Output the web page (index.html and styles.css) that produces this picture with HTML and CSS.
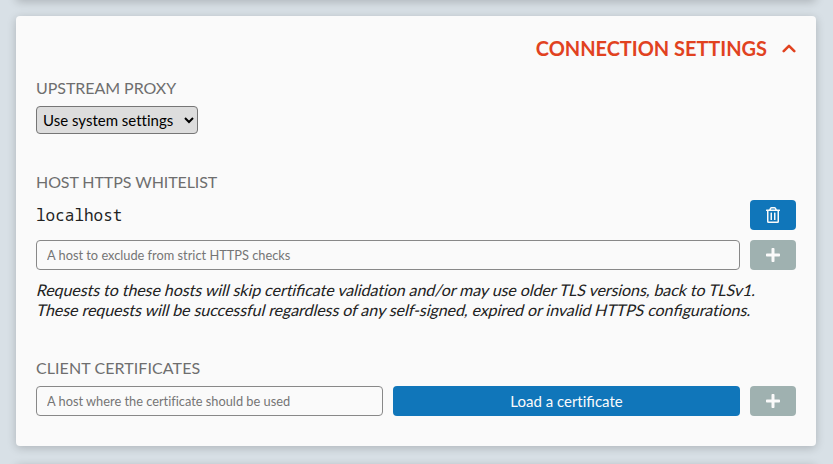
FILE: index.html
```html
<!DOCTYPE html>
<html lang="en">
<head>
<meta charset="utf-8">
<title>Settings</title>
<link rel="stylesheet" href="styles.css">
</head>
<body>
<main class="page">
<div class="card previous"></div>
<section class="card">
  <header class="card-header">
    <h1>Connection settings</h1>
    <svg class="chevron" viewBox="0 0 14 9"><path d="M1.700 7.100L7 1.900L12.300 7.100"/></svg>
  </header>
  <h2 class="label upstream">Upstream Proxy</h2>
  <select class="proxy"><option>Use system settings</option></select>
  <h2 class="label hosts">Host HTTPS Whitelist</h2>
  <div class="grid whitelist">
    <div class="host">localhost</div>
    <button class="button"><svg class="trash" viewBox="0 0 448 512"><path d="M268 416h24a12 12 0 0 0 12-12V188a12 12 0 0 0-12-12h-24a12 12 0 0 0-12 12v216a12 12 0 0 0 12 12zM432 80h-82.41l-34-56.7A48 48 0 0 0 274.41 0H173.59a48 48 0 0 0-41.16 23.3L98.41 80H16A16 16 0 0 0 0 96v16a16 16 0 0 0 16 16h16v336a48 48 0 0 0 48 48h288a48 48 0 0 0 48-48V128h16a16 16 0 0 0 16-16V96a16 16 0 0 0-16-16zM171.84 50.91A6 6 0 0 1 177 48h94a6 6 0 0 1 5.15 2.91L293.61 80H154.39zM368 464H80V128h288zm-212-48h24a12 12 0 0 0 12-12V188a12 12 0 0 0-12-12h-24a12 12 0 0 0-12 12v216a12 12 0 0 0 12 12z"/></svg></button>
    <input class="input" placeholder="A host to exclude from strict HTTPS checks">
    <button class="button" disabled><svg class="plus" viewBox="0 0 448 512"><path d="M416 208H272V64c0-17.670-14.330-32-32-32h-32c-17.670 0-32 14.330-32 32v144H32c-17.670 0-32 14.330-32 32v32c0 17.670 14.330 32 32 32h144v144c0 17.670 14.330 32 32 32h32c17.670 0 32-14.330 32-32V304h144c17.670 0 32-14.330 32-32v-32c0-17.670-14.330-32-32-32z"/></svg></button>
  </div>
  <p class="note"><span class="line">Requests to these hosts will skip certi<span class="fi">fi</span>cate validation and/or may use older TLS versions, back to TLSv1.</span> <span class="line">These requests will be successful regardless of any self-signed, expired or invalid HTTPS con<span class="fi">fi</span>gurations.</span></p>
  <h2 class="label clients">Client Certificates</h2>
  <div class="grid certificates">
    <input class="input" placeholder="A host where the certificate should be used">
    <button class="button"><span>Load a certi<span class="fi">fi</span>cate</span></button>
    <button class="button" disabled><svg class="plus" viewBox="0 0 448 512"><path d="M416 208H272V64c0-17.670-14.330-32-32-32h-32c-17.670 0-32 14.330-32 32v144H32c-17.670 0-32 14.330-32 32v32c0 17.670 14.330 32 32 32h144v144c0 17.670 14.330 32 32 32h32c17.670 0 32-14.330 32-32V304h144c17.670 0 32-14.330 32-32v-32c0-17.670-14.330-32-32-32z"/></svg></button>
  </div>
</section>
<div class="card next"></div>
</main>
</body>
</html>
```
FILE: styles.css
```css
* { box-sizing: border-box; }
body {
  margin: 0;
  background: #d8e0e6;
  color: #222;
  font: 16px/20px Lato, sans-serif;
  font-variant-ligatures: none;
}
.page {
  height: 464px;
  padding: 0 17px 0 16px;
  overflow: hidden;
}
.card {
  height: 430px;
  padding: 20px;
  border-radius: 4px;
  background: #fafafa;
  box-shadow: 0 2px 10px rgba(0, 0, 0, 0.2);
}
.previous { height: 40px; margin: -40px 0 16px; }
.next { height: 40px; margin-top: 18px; }
.card-header {
  display: flex;
  justify-content: flex-end;
  align-items: center;
  height: 24px;
  margin-bottom: 18px;
  color: #e1421f;
}
h1 {
  margin: 0;
  font-size: 20px;
  font-weight: bold;
  letter-spacing: -0.04px;
  text-transform: uppercase;
}
svg { display: block; fill: currentColor; }
.chevron {
  width: 14px;
  margin-left: 15px;
  fill: none;
  stroke: currentColor;
  stroke-width: 2.6;
  stroke-linecap: round;
  stroke-linejoin: round;
}
.label {
  margin: 0 0 8px;
  color: #6e6e6e;
  font-size: 16px;
  font-weight: normal;
  text-transform: uppercase;
}
.upstream { letter-spacing: -0.05px; }
.hosts { letter-spacing: -0.08px; }
.clients { letter-spacing: 0.08px; }
.proxy {
  display: block;
  width: 162px;
  height: 28px;
  margin-bottom: 38px;
  padding: 0 3px 1px 2px;
  border: 1px solid #767676;
  border-radius: 4px;
  background: #ddd;
  color: #000;
  font: 15px Lato, sans-serif;
  font-variant-ligatures: none;
}
.grid { display: grid; gap: 10px; grid-auto-rows: 30px; }
.whitelist { grid-template-columns: 1fr 46px; }
.certificates { grid-template-columns: 1fr 1fr 46px; }
.host { font: 16px/30px "Noto Sans Mono", "DejaVu Sans Mono", monospace; }
.input {
  width: 100%;
  padding: 5px 10px;
  border: 1px solid #888;
  border-radius: 4px;
  background: #fafafa;
  font: 12.8px Lato, sans-serif;
  font-variant-ligatures: none;
}
.input::placeholder { color: #757575; }
.button {
  display: flex;
  align-items: center;
  justify-content: center;
  padding: 0;
  border: 0;
  border-radius: 4px;
  background: #1076ba;
  color: #fafafa;
  font: 15px Lato, sans-serif;
  font-variant-ligatures: none;
}
.button:disabled { background: #9fb1b0; }
.fi { letter-spacing: 0; font-variant-ligatures: common-ligatures; }
.trash { width: 14px; }
.plus { width: 14px; }
.note { margin: 10px 0 38px; }
/* Slant the regular face about the text baseline. */
.line {
  display: block;
  width: max-content;
  letter-spacing: -0.072px;
  white-space: nowrap;
  transform: skewX(-14deg);
  transform-origin: 0 15px;
}
```
